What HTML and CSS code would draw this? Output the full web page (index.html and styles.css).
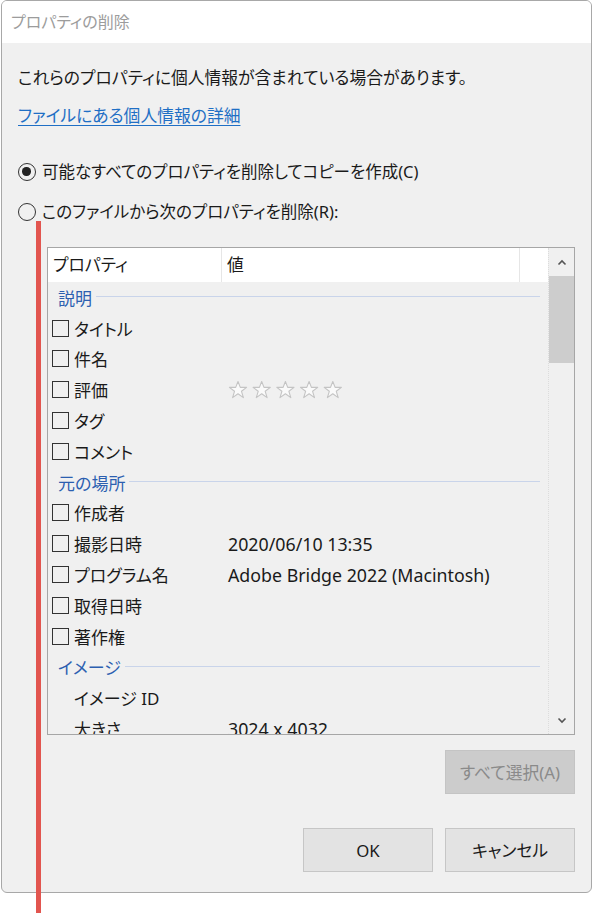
FILE: index.html
```html
<!DOCTYPE html>
<html lang="ja">
<head>
<meta charset="utf-8">
<title>プロパティの削除</title>
<link rel="stylesheet" href="styles.css">
</head>
<body>
<div class="window">
  <div class="titlebar">プロパティの削除</div>
  <div class="content">
    <p class="intro">これらのプロパティに個人情報が含まれている場合があります。</p>
    <a class="link" href="#">ファイルにある個人情報の詳細</a>
    <label class="radio-row first"><span class="radio checked"></span><span>可能なすべてのプロパティを削除してコピーを作成(C)</span></label>
    <label class="radio-row second"><span class="radio"></span><span>このファイルから次のプロパティを削除(R):</span></label>

    <div class="table">
      <div class="list">
        <div class="head">
          <div class="hcell">プロパティ</div>
          <div class="hcell">値</div>
          <div class="hcell last"></div>
        </div>
        <div class="group"><span>説明</span><i></i></div>
        <div class="row"><span class="cb"></span><span class="name">タイトル</span></div>
        <div class="row"><span class="cb"></span><span class="name">件名</span></div>
        <div class="row"><span class="cb"></span><span class="name">評価</span>
          <span class="value">
            <svg class="stars" width="118" height="20" viewBox="0 0 118 20">
              <g fill="#fafafa" stroke="#c4c4c4" stroke-width="1.1" stroke-linejoin="round">
                <polygon points="10,1.5 12.3,7.4 18.6,7.4 13.5,11.3 15.4,17.6 10,13.8 4.6,17.6 6.5,11.3 1.4,7.4 7.7,7.4"/>
                <polygon transform="translate(23.7 0)" points="10,1.5 12.3,7.4 18.6,7.4 13.5,11.3 15.4,17.6 10,13.8 4.6,17.6 6.5,11.3 1.4,7.4 7.7,7.4"/>
                <polygon transform="translate(47.4 0)" points="10,1.5 12.3,7.4 18.6,7.4 13.5,11.3 15.4,17.6 10,13.8 4.6,17.6 6.5,11.3 1.4,7.4 7.7,7.4"/>
                <polygon transform="translate(71.1 0)" points="10,1.5 12.3,7.4 18.6,7.4 13.5,11.3 15.4,17.6 10,13.8 4.6,17.6 6.5,11.3 1.4,7.4 7.7,7.4"/>
                <polygon transform="translate(94.8 0)" points="10,1.5 12.3,7.4 18.6,7.4 13.5,11.3 15.4,17.6 10,13.8 4.6,17.6 6.5,11.3 1.4,7.4 7.7,7.4"/>
              </g>
            </svg>
          </span>
        </div>
        <div class="row"><span class="cb"></span><span class="name">タグ</span></div>
        <div class="row"><span class="cb"></span><span class="name">コメント</span></div>
        <div class="group"><span>元の場所</span><i></i></div>
        <div class="row"><span class="cb"></span><span class="name">作成者</span></div>
        <div class="row"><span class="cb"></span><span class="name">撮影日時</span><span class="value latin">2020/06/10 13:35</span></div>
        <div class="row"><span class="cb"></span><span class="name">プログラム名</span><span class="value latin">Adobe Bridge 2022 (Macintosh)</span></div>
        <div class="row"><span class="cb"></span><span class="name">取得日時</span></div>
        <div class="row"><span class="cb"></span><span class="name">著作権</span></div>
        <div class="group"><span>イメージ</span><i></i></div>
        <div class="row nocb"><span class="name">イメージ ID</span></div>
        <div class="row nocb"><span class="name">大きさ</span><span class="value latin">3024 x 4032</span></div>
      </div>
      <div class="scrollbar">
        <div class="arrow">
          <svg width="10" height="7" viewBox="0 0 10 7"><polyline points="1.5,5.5 5,2 8.5,5.5" fill="none" stroke="#555" stroke-width="1.6"/></svg>
        </div>
        <div class="thumb"></div>
        <div class="track"></div>
        <div class="arrow">
          <svg width="10" height="7" viewBox="0 0 10 7"><polyline points="1.5,1.5 5,5 8.5,1.5" fill="none" stroke="#555" stroke-width="1.6"/></svg>
        </div>
      </div>
    </div>

    <div class="select-row">
      <button class="btn disabled">すべて選択(A)</button>
    </div>
    <div class="footer">
      <button class="btn">OK</button>
      <button class="btn">キャンセル</button>
    </div>
  </div>
</div>
<div class="marker"></div>
</body>
</html>
```

FILE: styles.css
```css
html, body {
  margin: 0;
  padding: 0;
  background: #ffffff;
}
body {
  font-family: "Noto Sans", "Noto Sans CJK JP", sans-serif;
  font-size: 16px;
  color: #1a1a1a;
  position: relative;
  width: 594px;
  height: 914px;
  overflow: hidden;
}
.window {
  box-sizing: border-box;
  margin-left: 1px;
  width: 591px;
  height: 893px;
  border: 1px solid #a8a8a8;
  border-radius: 6px;
  overflow: hidden;
  background: #f0f0f0;
  display: flex;
  flex-direction: column;
}
.titlebar {
  height: 42px;
  line-height: 42px;
  background: #ffffff;
  padding-left: 9px;
  font-size: 16px;
  color: #9c9c9c;
  font-feature-settings: "palt";
  flex: none;
}
.content {
  padding: 0 16px;
  display: flex;
  flex-direction: column;
  align-items: flex-start;
}
.intro {
  margin: 23px 0 0 0;
  line-height: 24px;
  font-feature-settings: "palt";
  font-size: 16.8px;
}
.link {
  margin-top: 14px;
  line-height: 24px;
  color: #1f6fc5;
  text-decoration: underline;
  text-underline-offset: 3px;
  font-feature-settings: "palt";
  font-size: 16.8px;
}
.radio-row {
  display: flex;
  align-items: center;
  gap: 6px;
  line-height: 24px;
  font-feature-settings: "palt";
  font-size: 16.5px;
}
.radio-row.first { margin-top: 32px; }
.radio-row.second { margin-top: 16px; }
.radio {
  box-sizing: border-box;
  width: 18px;
  height: 18px;
  border: 1.6px solid #333;
  border-radius: 50%;
  position: relative;
  flex: none;
}
.radio.checked::after {
  content: "";
  position: absolute;
  left: 3.2px;
  top: 3.2px;
  width: 8.4px;
  height: 8.4px;
  border-radius: 50%;
  background: #222;
}
.table {
  box-sizing: border-box;
  margin: 23px 0 0 29px;
  width: 528px;
  height: 488px;
  border: 1px solid #a6a6a6;
  display: flex;
  background: #f0f0f0;
}
.list {
  width: 500px;
  flex: none;
  overflow: hidden;
  display: flex;
  flex-direction: column;
}
.head {
  height: 34px;
  flex: none;
  background: #ffffff;
  display: grid;
  grid-template-columns: 174px 298px 1fr;
}
.hcell {
  border-right: 1px solid #e6e6e6;
  padding-left: 5px;
  line-height: 34px;
  font-feature-settings: "palt";
  font-size: 16.8px;
}
.hcell.last { border-right: none; }
.group {
  height: 30.8px;
  flex: none;
  display: flex;
  align-items: center;
  padding: 0 8px 0 10px;
  gap: 4px;
  color: #2c5fb0;
  font-feature-settings: "palt";
  font-size: 17px;
}
.group i {
  flex: 1;
  height: 1px;
  background: #c9d4ea;
  margin-top: -1px;
}
.row {
  height: 30.8px;
  flex: none;
  display: flex;
  align-items: center;
  padding-left: 4px;
  font-size: 17px;
  font-feature-settings: "palt";
  position: relative;
}
.row.nocb { padding-left: 26px; }
.cb {
  box-sizing: border-box;
  width: 17px;
  height: 17px;
  border: 1.5px solid #333;
  margin-right: 5px;
  flex: none;
}
.value {
  position: absolute;
  left: 180px;
  top: 0;
  height: 100%;
  display: flex;
  align-items: center;
}
.value.latin { font-size: 17.8px; }
.stars { display: block; }
.scrollbar {
  width: 26px;
  flex: none;
  border-left: 1px dotted #dcdcdc;
  box-sizing: border-box;
  display: flex;
  flex-direction: column;
}
.arrow {
  height: 28px;
  display: flex;
  align-items: center;
  justify-content: center;
  flex: none;
}
.thumb {
  height: 87px;
  background: #cdcdcd;
  flex: none;
}
.track { flex: 1; }
.select-row {
  align-self: stretch;
  display: flex;
  justify-content: flex-end;
  margin-top: 15px;
}
.footer {
  align-self: stretch;
  display: flex;
  justify-content: flex-end;
  gap: 12px;
  margin-top: 34px;
}
.btn {
  box-sizing: border-box;
  width: 130px;
  height: 44px;
  border: 1px solid #c6c6c6;
  background: #e3e3e3;
  font-family: "Noto Sans", "Noto Sans CJK JP", sans-serif;
  font-size: 16.8px;
  color: #1a1a1a;
  font-feature-settings: "palt";
  padding: 0;
}
.btn.disabled {
  background: #cccccc;
  border-color: #c4c4c4;
  color: #8a8a8a;
}
.marker {
  position: absolute;
  left: 36px;
  top: 221px;
  width: 4.6px;
  height: 692px;
  background: #e2554f;
}
```
